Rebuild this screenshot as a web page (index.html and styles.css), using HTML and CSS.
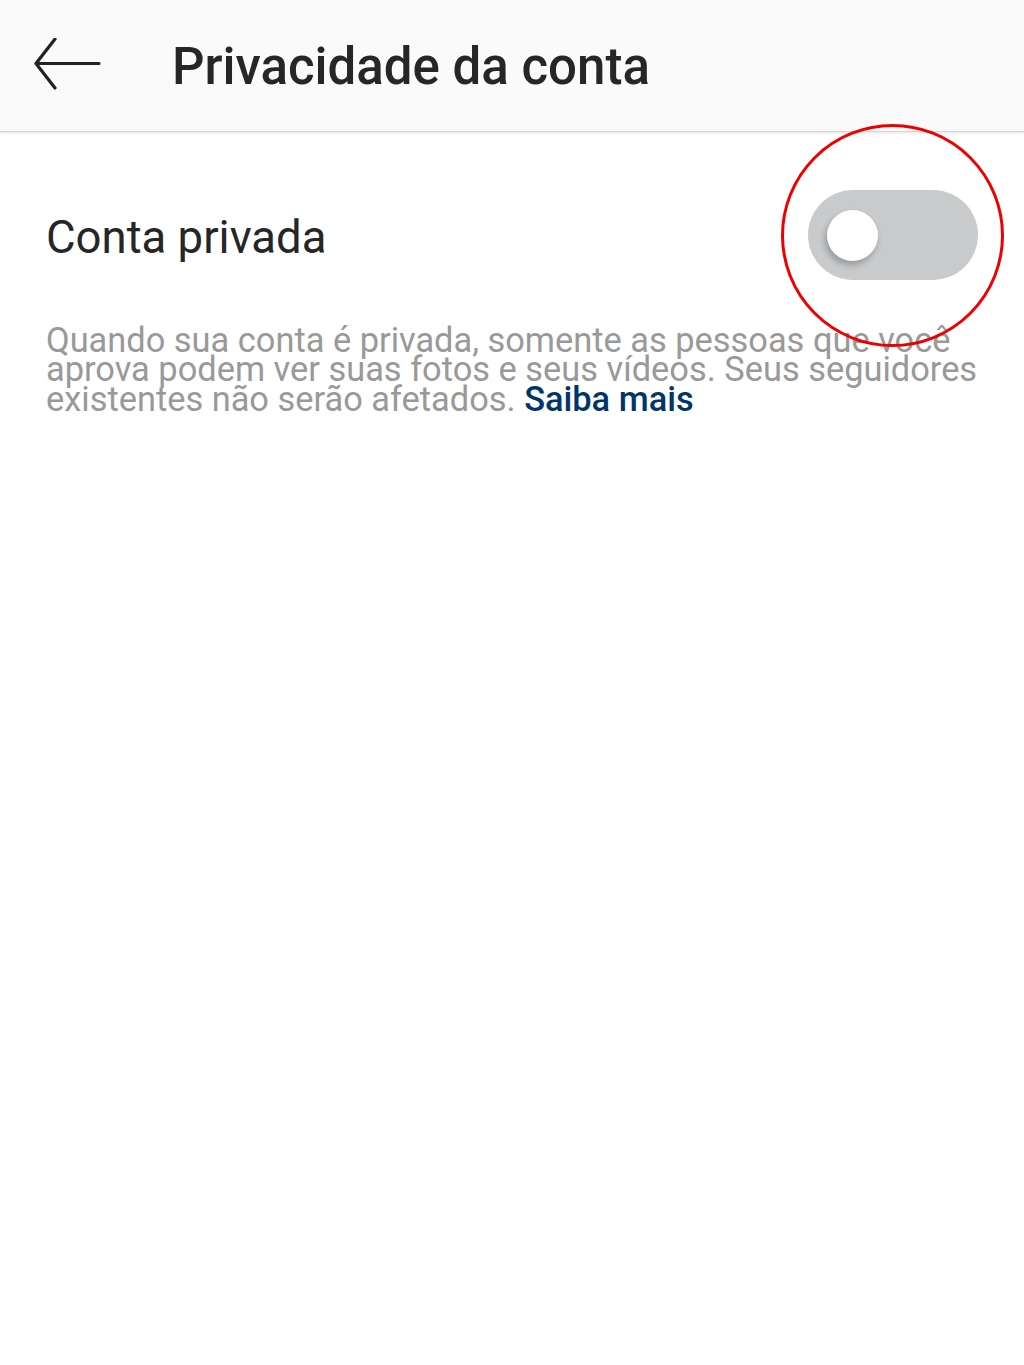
FILE: index.html
```html
<!DOCTYPE html>
<html lang="pt">
<head>
    <meta charset="UTF-8">
    <meta name="viewport" content="width=device-width, initial-scale=1.0">
    <title>Privacidade da conta</title>
    <link rel="stylesheet" href="styles.css">
</head>
<body>

<header class="topbar">
    <button class="back-btn" aria-label="Voltar">
        <svg width="70" height="52" viewBox="0 0 70 52">
            <path d="M67 25.5 H4 M23 1 L4 25.5 L23 50" fill="none" stroke="#222" stroke-width="3.2" stroke-linecap="round" stroke-linejoin="round"/>
        </svg>
    </button>
    <h1 class="title">Privacidade da conta</h1>
</header>

<main class="content">
    <div class="setting-row">
        <span class="setting-label">Conta privada</span>
        <div class="toggle-wrap">
            <div class="toggle">
                <div class="knob"></div>
            </div>
            <!-- red highlight circle drawn over the switch -->
            <div class="highlight"></div>
        </div>
    </div>
    <p class="setting-desc">Quando sua conta é privada, somente as pessoas que você aprova podem ver suas fotos e seus vídeos. Seus seguidores existentes não serão afetados. <a href="#" class="more-link">Saiba mais</a></p>
</main>

</body>
</html>
```

FILE: styles.css
```css
body {
    margin: 0;
    font-family: Roboto, "Noto Sans", sans-serif;
    background-color: #ffffff;
    color: #262626;
}

.topbar {
    height: 132px;
    background-color: #fafafa;
    border-bottom: 1px solid #d6d6d6;
    box-shadow: 0 1px 3px rgba(0, 0, 0, 0.12);
    display: flex;
    align-items: center;
    box-sizing: border-box;
}

.back-btn {
    background: none;
    border: none;
    padding: 0;
    margin-left: 32px;
    margin-top: -4px;
    width: 70px;
    height: 52px;
    cursor: pointer;
}

.title {
    margin: 2px 0 0 70px;
    font-size: 51px;
    font-weight: 500;
    color: #262626;
    white-space: nowrap;
}

.content {
    padding: 0 46px;
}

.setting-row {
    display: flex;
    align-items: center;
    justify-content: space-between;
    height: 206px;
}

.setting-label {
    font-size: 45.5px;
    color: #262626;
    margin-top: 4px;
}

.toggle-wrap {
    position: relative;
}

.toggle {
    width: 170px;
    height: 90px;
    border-radius: 45px;
    background-color: #c9cacc;
    position: relative;
}

.knob {
    position: absolute;
    left: 19px;
    top: 20px;
    width: 51px;
    height: 51px;
    border-radius: 50%;
    background-color: #ffffff;
    box-shadow: -2px 4px 6px rgba(0, 0, 0, 0.25);
}

.highlight {
    position: absolute;
    left: -27px;
    top: -66px;
    width: 223px;
    height: 223px;
    border: 3px solid #ee0000;
    border-radius: 50%;
    box-sizing: border-box;
    pointer-events: none;
    z-index: 2;
}

.setting-desc {
    margin: -12px 0 0 0;
    font-size: 34.4px;
    line-height: 29.4px;
    color: #999999;
    position: relative;
    z-index: 1;
}

.more-link {
    color: #003569;
    font-weight: 500;
    text-decoration: none;
}
```
